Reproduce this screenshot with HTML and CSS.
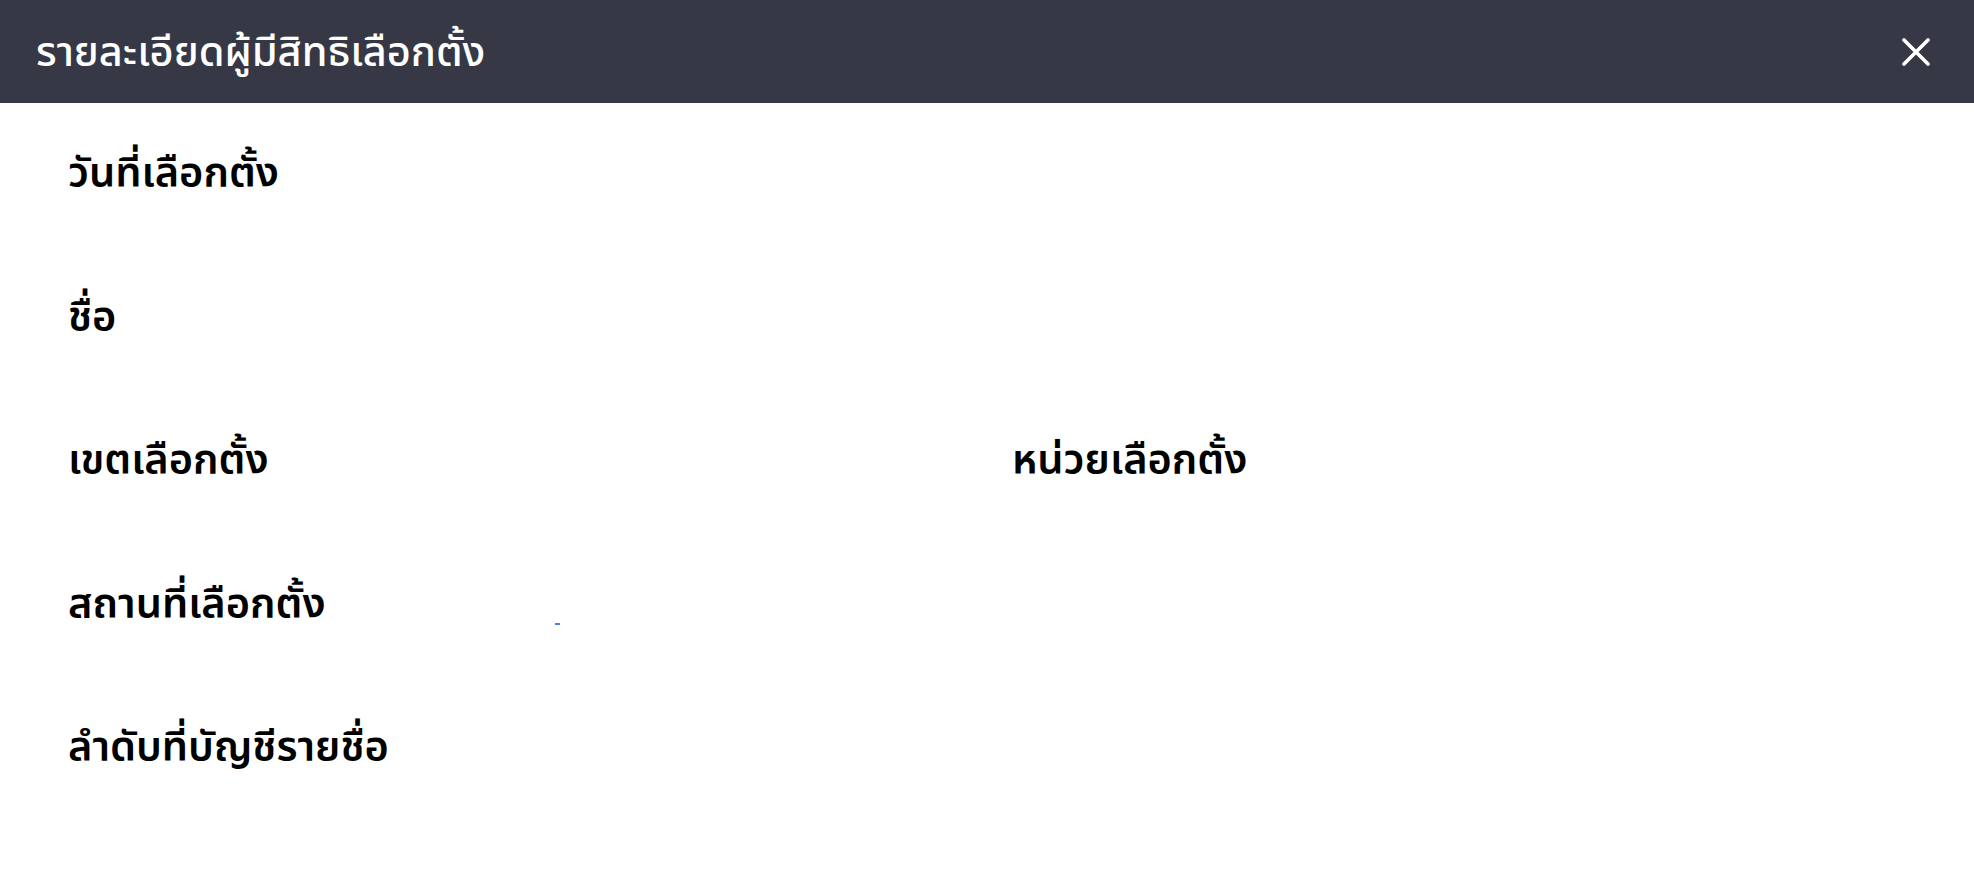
FILE: index.html
```html
<!DOCTYPE html>
<html lang="th">
  <head>
    <meta charset="UTF-8" />
    <meta name="viewport" content="width=device-width, initial-scale=1.0" />
    <title>รายละเอียดผู้มีสิทธิเลือกตั้ง</title>
    <link rel="stylesheet" href="styles.css">
  </head>
  <body>
    <header class="dialog-header">
      <h1>รายละเอียดผู้มีสิทธิเลือกตั้ง</h1>
      <button type="button" class="close-btn" aria-label="ปิด">
        <svg viewBox="0 0 28 28" width="28" height="28">
          <path d="M2 2 L26 26 M26 2 L2 26" stroke="#fff" stroke-width="3.6" stroke-linecap="round" />
        </svg>
      </button>
    </header>

    <div class="voter-info">
      <div class="field full">
        <span class="label">วันที่เลือกตั้ง</span>
        <span class="value" id="election-date"></span>
      </div>
      <div class="field full">
        <span class="label">ชื่อ</span>
        <span class="value" id="voter-name"></span>
      </div>
      <div class="field">
        <span class="label">เขตเลือกตั้ง</span>
        <span class="value" id="district"></span>
      </div>
      <div class="field">
        <span class="label">หน่วยเลือกตั้ง</span>
        <span class="value" id="unit"></span>
      </div>
      <div class="field full">
        <span class="label">สถานที่เลือกตั้ง</span>
        <span class="value" id="location"><span class="loading-dot"></span></span>
      </div>
      <div class="field full">
        <span class="label">ลำดับที่บัญชีรายชื่อ</span>
        <span class="value" id="list-no"></span>
      </div>
    </div>
  </body>
</html>
```

FILE: styles.css
```css
body {
  margin: 0;
  font-family: "Noto Sans", "Noto Sans Thai", sans-serif;
  color: #000;
  background: #fff;
}
.dialog-header {
  height: 103px;
  background: #363845;
  display: flex;
  align-items: center;
  justify-content: space-between;
  padding: 4px 36px 0 36px;
  box-sizing: border-box;
}
.dialog-header h1 {
  margin: 0;
  color: #fff;
  font-size: 41.5px;
  font-weight: 500;
}
.close-btn {
  background: none;
  border: none;
  padding: 0;
  width: 28px;
  height: 28px;
  cursor: pointer;
  margin: 0 8px 4px 0;
}
.close-btn svg {
  display: block;
}
.voter-info {
  display: grid;
  grid-template-columns: 1fr 1fr;
  column-gap: 50px;
  padding: 40px 68px 20px;
}
.field {
  height: 143.5px;
  position: relative;
}
.field.full {
  grid-column: 1 / -1;
}
.label {
  font-size: 41.5px;
  font-weight: 600;
}
.loading-dot {
  position: absolute;
  left: 487px;
  top: 49px;
  width: 5px;
  height: 2px;
  background: #4a80e6;
}
```
